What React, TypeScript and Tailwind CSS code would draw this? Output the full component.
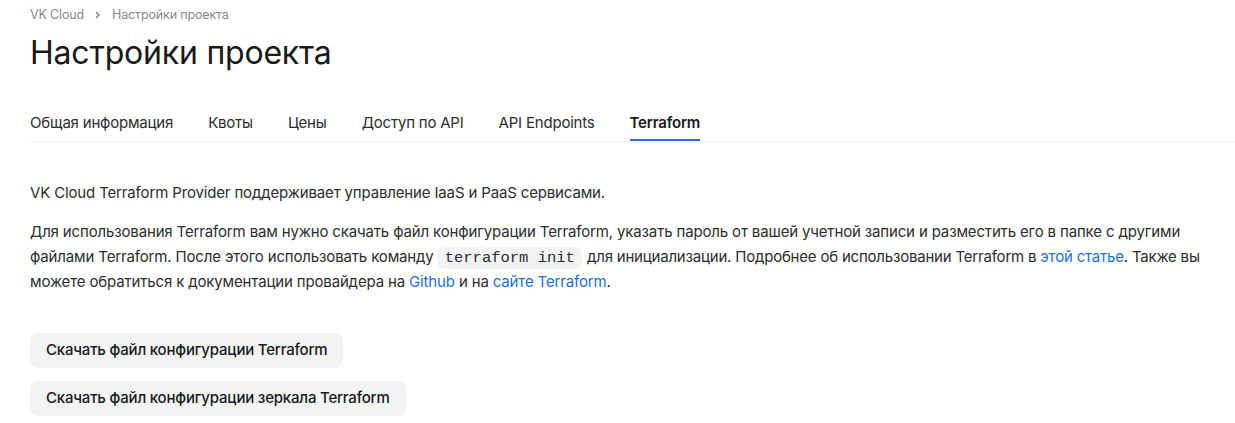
import React from "react";

const tabs = ["Общая информация", "Квоты", "Цены", "Доступ по API", "API Endpoints", "Terraform"];

export default function App() {
  return (
    <div className="min-h-[423px] bg-white pl-[30px] text-[#2c2d2e]" style={{ fontFamily: "Inter, 'Noto Sans', sans-serif" }}>
      <div className="flex items-center gap-[8px] pt-[7px] text-[12.5px] leading-[16px] tracking-[-0.15px] text-[#87898f]">
        <span>VK Cloud</span>
        <svg width="10" height="10" viewBox="0 0 10 10" className="mx-[1px]">
          <path d="M3.5 2.5 L6 5 L3.5 7.5" fill="none" stroke="#87898f" strokeWidth="1.6" strokeLinecap="round" strokeLinejoin="round" />
        </svg>
        <span>Настройки проекта</span>
      </div>
      <h1 className="mt-[10px] text-[32px] leading-[40px] font-normal tracking-[-0.2px] text-[#19191a]">Настройки проекта</h1>
      <div className="mt-[38px] flex gap-[35px] border-b border-[#f0f1f3] text-[15px] leading-[20px] tracking-[-0.2px]">
        {tabs.map((t, i) => (
          <div
            key={t}
            className={
              i === tabs.length - 1
                ? "border-b-2 border-[#2a6cf6] pt-[2px] pb-[6px] font-semibold text-[#19191a]"
                : "border-b-2 border-transparent pt-[2px] pb-[6px] text-[#2c2d2e]"
            }
          >
            {t}
          </div>
        ))}
      </div>
      <div className="text-[15px] leading-[24.5px] tracking-[-0.15px]">
        <p className="mt-[39px]">VK Cloud Terraform Provider поддерживает управление IaaS и PaaS сервисами.</p>
        <p className="mt-[14.5px] whitespace-nowrap">
          Для использования Terraform вам нужно скачать файл конфигурации Terraform, указать пароль от вашей учетной записи и разместить его в папке с другими
          <br />
          файлами Terraform. После этого использовать команду{" "}
          <code
            className="mr-[1px] rounded-[6px] bg-[#f2f3f5] px-[7px] py-[2px] text-[15.5px] tracking-normal text-[#2c2d2e]"
            style={{ fontFamily: "'Liberation Mono', 'DejaVu Sans Mono', monospace" }}
          >
            terraform init
          </code>{" "}
          <span className="tracking-[-0.2px]">
            для инициализации. Подробнее об использовании Terraform в <a className="text-[#1a6fe6]">этой статье</a>. Также вы
          </span>
          <br />
          можете обратиться к документации провайдера на <a className="text-[#1a6fe6]">Github</a> и на{" "}
          <a className="text-[#1a6fe6]">сайте Terraform</a>.
        </p>
      </div>
      <div className="mt-[38.5px] flex flex-col items-start gap-[13px]">
        <button className="h-[35px] rounded-[8px] bg-[#f2f3f5] px-[16px] text-[15px] font-medium tracking-[-0.2px] text-[#19191a]">
          Скачать файл конфигурации Terraform
        </button>
        <button className="h-[35px] rounded-[8px] bg-[#f2f3f5] px-[16px] text-[15px] font-medium tracking-[-0.2px] text-[#19191a]">
          Скачать файл конфигурации зеркала Terraform
        </button>
      </div>
    </div>
  );
}
